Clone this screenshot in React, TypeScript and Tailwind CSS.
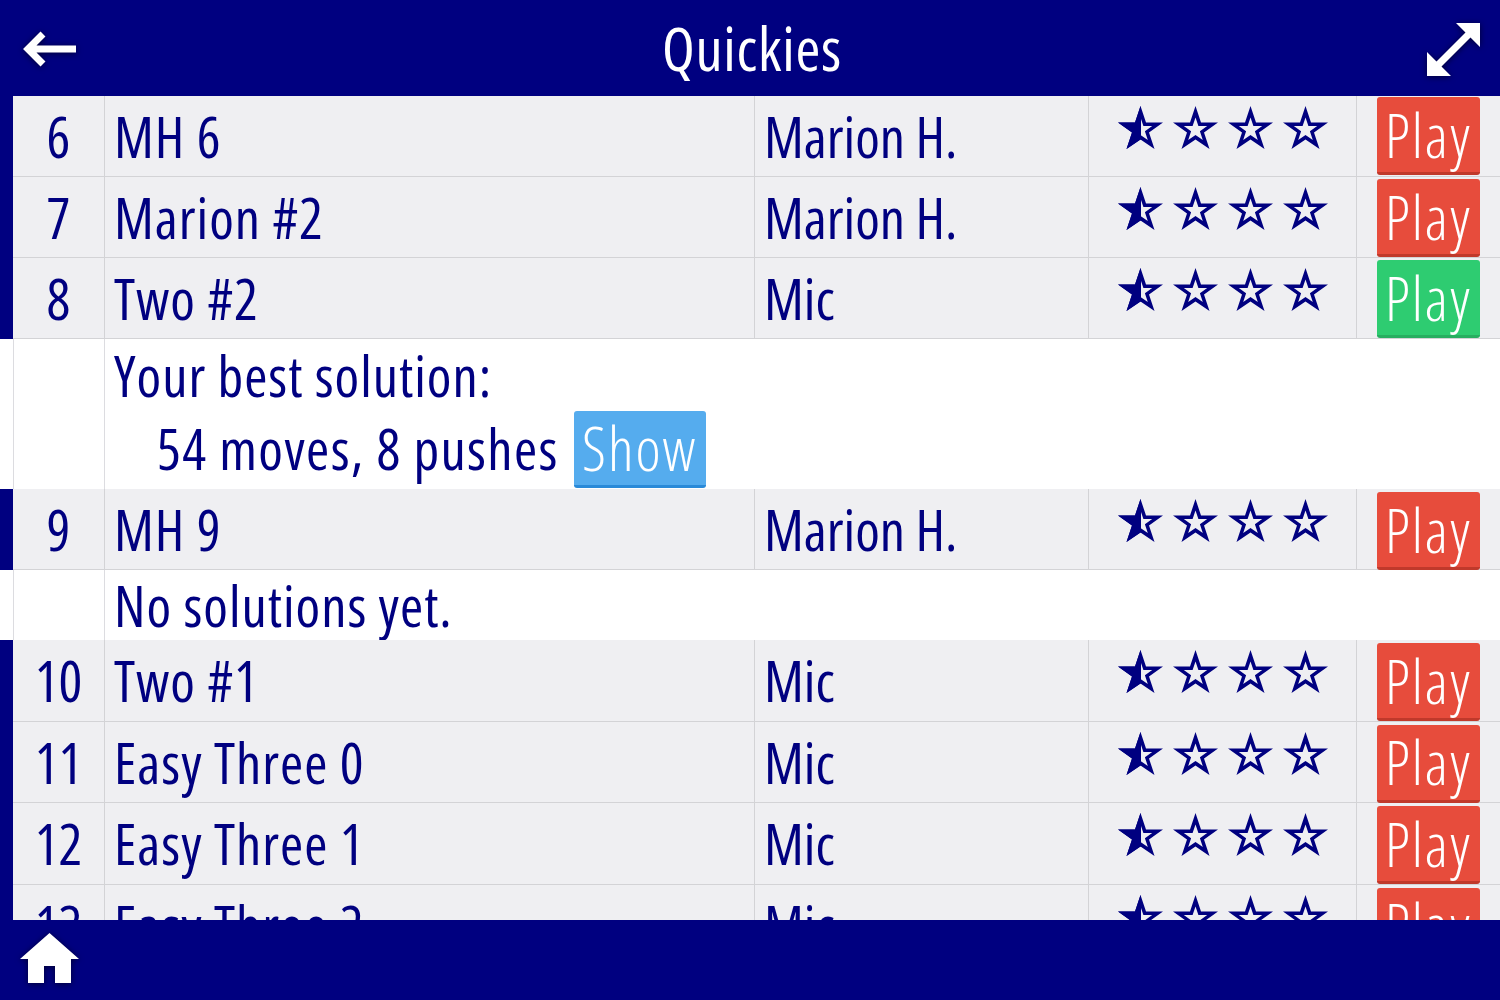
const games = [
  { n: 6, name: 'MH 6', author: 'Marion H.', tone: 'red', height: 'h-[81px]', gap: 'mt-px' },
  { n: 7, name: 'Marion #2', author: 'Marion H.', tone: 'red', height: 'h-[81px]', gap: 'mt-[2px]' },
  { n: 8, name: 'Two #2', author: 'Mic', tone: 'green', solved: true, height: 'h-[81px]', gap: 'mt-[2px]' },
  { n: 9, name: 'MH 9', author: 'Marion H.', tone: 'red', none: true, height: 'h-[81px]', gap: 'mt-[3px]' },
  { n: 10, name: 'Two #1', author: 'Mic', tone: 'red', height: 'h-[81.5px]', gap: 'mt-[3px]' },
  { n: 11, name: 'Easy Three 0', author: 'Mic', tone: 'red', height: 'h-[81.5px]', gap: 'mt-[3px]' },
  { n: 12, name: 'Easy Three 1', author: 'Mic', tone: 'red', height: 'h-[81.5px]', gap: 'mt-[3px]' },
  { n: 13, name: 'Easy Three 2', author: 'Mic', tone: 'red', height: 'h-[81.5px]', gap: 'mt-[3px]' },
];

const OUTER = 'M22.5 0L28 16.5H45L31 26.5L36.5 43L22.5 33.5L8.5 43L14 26.5L0 16.5H17Z';
const INNER = 'M22.5 11.5L25.4 20.1H34.2L26.9 25.3L29.8 33.9L22.5 28.9L15.2 33.9L18.1 25.3L10.8 20.1H19.6Z';

function Star({ half }: { half?: boolean }) {
  return (
    <svg width="45" height="43" viewBox="0 0 45 43" fill="#000080">
      <path fillRule="evenodd" d={`${OUTER} ${INNER}`} />
      {half && <polygon points="22.5,0 23,1.5 23,33.8 22.5,33.5 8.5,43 14,26.5 0,16.5 17,16.5" />}
    </svg>
  );
}

function PlayButton({ tone, gap }: { tone: string; gap: string }) {
  const color =
    tone === 'green'
      ? 'bg-[#2ecc71] border-[#27ae60]'
      : 'bg-[#e74c3c] border-[#c0392b]';
  return (
    <div className={`${color} ${gap} w-[103px] h-[78px] rounded-[3px] border-b-[3px] flex items-center justify-center text-white text-[60px] tracking-[2px] leading-none font-light`}>
      Play
    </div>
  );
}

function GameRow({ game }: { game: (typeof games)[number] }) {
  return (
    <div className={`${game.height} shrink-0 flex border-l-[13px] border-[#000080] bg-[#efeff2] text-[#000080] text-[56px] leading-none`}>
      <div className="w-[92px] flex items-center justify-center border-r border-b border-r-[#d3d3d6] border-b-[#d3d3d6]">{game.n}</div>
      <div className="w-[650px] pl-[9px] flex items-center tracking-[1px] border-r border-b border-r-[#d3d3d6] border-b-[#d3d3d6]">{game.name}</div>
      <div className="w-[334px] pl-[9px] flex items-center border-r border-b border-r-[#d3d3d6] border-b-[#d3d3d6]">{game.author}</div>
      <div className="w-[268px] flex justify-center gap-[10px] pt-[10px] border-r border-b border-r-[#d3d3d6] border-b-[#d3d3d6]">
        <Star half />
        <Star />
        <Star />
        <Star />
      </div>
      <div className="flex-1 pl-5 border-b border-[#d3d3d6]">
        <PlayButton tone={game.tone} gap={game.gap} />
      </div>
    </div>
  );
}

function DetailRow({ children, height }: { children: React.ReactNode; height: string }) {
  return (
    <div className={`${height} shrink-0 flex pl-[13px] bg-white text-[#000080] text-[56px] leading-none`}>
      <div className="w-[92px] shrink-0 border-x border-[#dcdce0]" />
      <div className="flex-1 pl-[9px]">{children}</div>
    </div>
  );
}

export default function App() {
  return (
    <div className="w-[1500px] h-[1000px] flex flex-col overflow-hidden bg-[#000080] font-['Open_Sans',sans-serif] font-stretch-[75%]">
      <header className="h-24 shrink-0 flex items-center justify-between pl-[23px] pr-5 text-white">
        <svg width="54" height="36" viewBox="0 0 54 36" className="drop-shadow-[0_1px_3px_rgba(0,0,0,0.6)] mt-px">
          <path d="M53 18H6M20 3L5 18L20 33" fill="none" stroke="#fff" strokeWidth="7" />
        </svg>
        <div className="text-[60px] leading-none tracking-[0.8px]">Quickies</div>
        <svg width="53" height="53" viewBox="0 0 53 53" fill="#fff" className="mt-[2px] drop-shadow-[0_1px_3px_rgba(0,0,0,0.6)]">
          <path d="M29 0H53V24L43.5 14.5L14.5 43.5L24 53H0V29L9.5 38.5L38.5 9.5Z" />
        </svg>
      </header>

      <main className="flex-1 min-h-0 overflow-hidden flex flex-col">
        {games.map((game) => (
          <div key={game.n} className="contents">
            <GameRow game={game} />
            {game.solved && (
              <DetailRow height="h-[150px]">
                <div className="h-[71px] flex items-center tracking-[1px]">Your best solution:</div>
                <div className="flex items-center pl-[43px] h-[79px]">
                  <span className="tracking-[1.4px] mt-[-3px]">54 moves, 8 pushes</span>
                  <div className="ml-[15px] w-[132px] h-[77px] rounded-[3px] border-b-[3px] border-[#2a8ad8] bg-[#55acee] flex items-center justify-center text-white text-[60px] tracking-[2px] font-light">
                    Show
                  </div>
                </div>
              </DetailRow>
            )}
            {game.none && (
              <DetailRow height="h-[70px]">
                <div className="h-full flex items-center tracking-[1px]">No solutions yet.</div>
              </DetailRow>
            )}
          </div>
        ))}
      </main>

      <footer className="h-20 shrink-0 pl-5 pt-[13px]">
        <svg width="60" height="51" viewBox="0 0 60 51" fill="#fff" className="drop-shadow-[0_1px_3px_rgba(0,0,0,0.6)]">
          <path d="M29.5 0L59 26H51V50H35V33H24V50H8V26H0Z" />
        </svg>
      </footer>
    </div>
  );
}
